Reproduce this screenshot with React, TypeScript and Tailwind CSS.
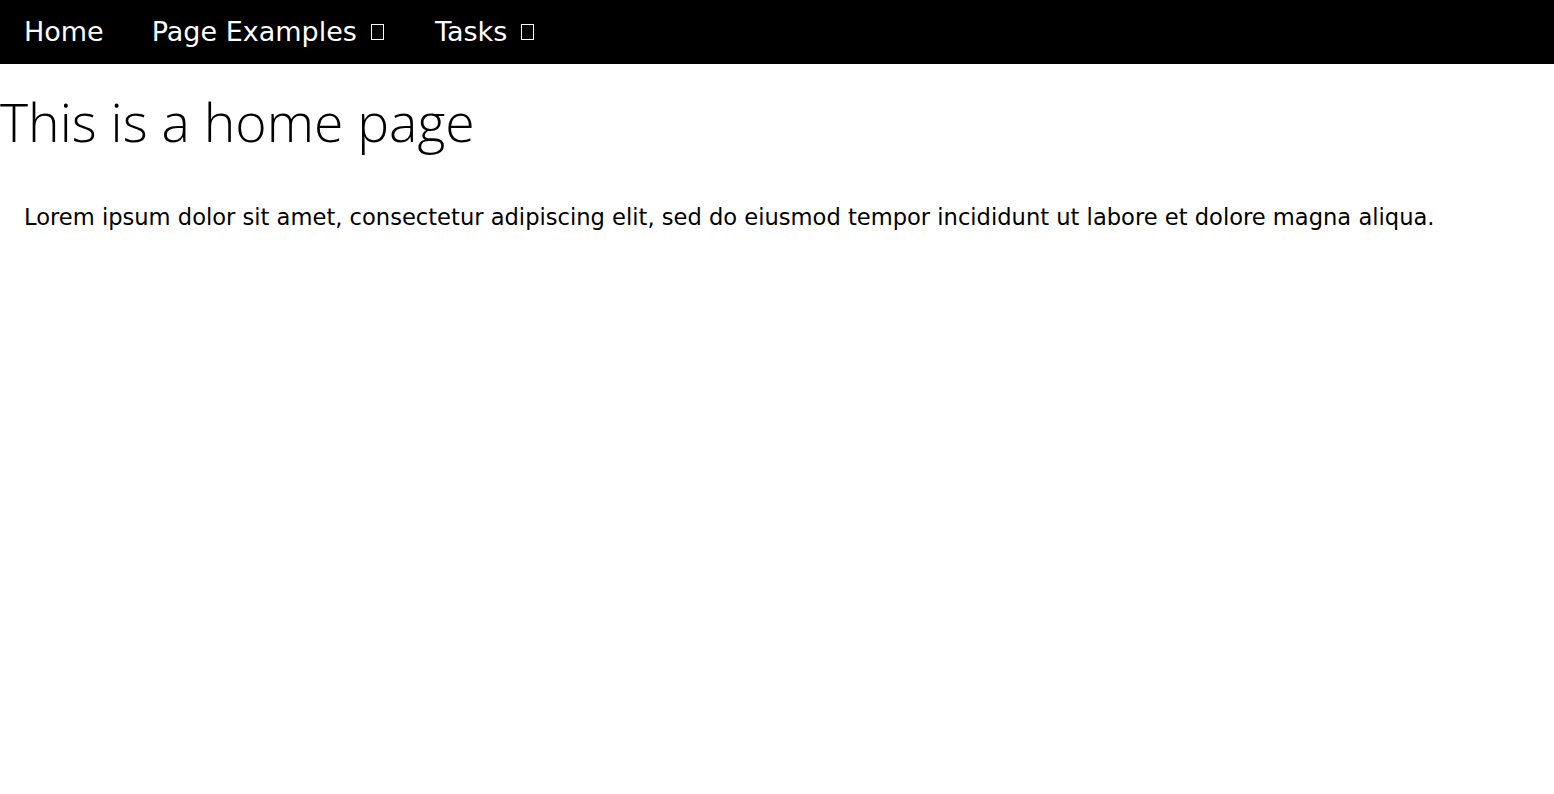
import { ReactNode } from 'react'

function Tofu() {
  return <span className="mr-[3px] ml-[14px] inline-block h-[16px] w-[13px] border border-white align-[-1px]" />
}

function NavItem({ children, caret }: { children: ReactNode; caret?: boolean }) {
  return (
    <a href="#" className="flex items-center px-[24px] text-white">
      {children}
      {caret && <Tofu />}
    </a>
  )
}

export default function App() {
  return (
    <div className="min-h-screen bg-white text-black">
      <nav className="flex h-[64px] items-center bg-black font-['DejaVu_Sans',sans-serif] text-[27px]">
        <NavItem>Home</NavItem>
        <NavItem caret>Page Examples</NavItem>
        <NavItem caret>Tasks</NavItem>
      </nav>
      <h1 className="mt-[20px] font-['Open_Sans',sans-serif] text-[53.5px] leading-[76px] font-light">
        This is a home page
      </h1>
      <p className="mt-[41px] px-[24px] font-['DejaVu_Sans',sans-serif] text-[22.6px]">
        Lorem ipsum dolor sit amet, consectetur adipiscing elit, sed do eiusmod tempor incididunt ut labore et dolore magna aliqua.
      </p>
    </div>
  )
}
